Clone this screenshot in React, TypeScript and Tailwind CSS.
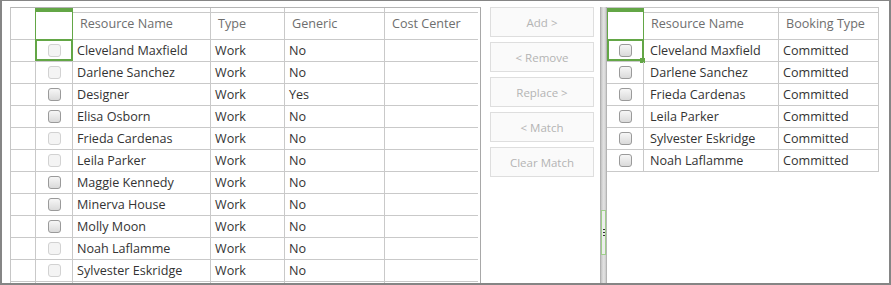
import React from 'react'

const leftRows = [
    { name: 'Cleveland Maxfield', type: 'Work', generic: 'No', taken: true },
    { name: 'Darlene Sanchez', type: 'Work', generic: 'No', taken: true },
    { name: 'Designer', type: 'Work', generic: 'Yes', taken: false },
    { name: 'Elisa Osborn', type: 'Work', generic: 'No', taken: false },
    { name: 'Frieda Cardenas', type: 'Work', generic: 'No', taken: true },
    { name: 'Leila Parker', type: 'Work', generic: 'No', taken: true },
    { name: 'Maggie Kennedy', type: 'Work', generic: 'No', taken: false },
    { name: 'Minerva House', type: 'Work', generic: 'No', taken: false },
    { name: 'Molly Moon', type: 'Work', generic: 'No', taken: false },
    { name: 'Noah Laflamme', type: 'Work', generic: 'No', taken: true },
    { name: 'Sylvester Eskridge', type: 'Work', generic: 'No', taken: true },
    { name: '', type: '', generic: '', taken: false },
]

const rightRows = ['Cleveland Maxfield', 'Darlene Sanchez', 'Frieda Cardenas', 'Leila Parker', 'Sylvester Eskridge', 'Noah Laflamme']

const buttons = ['Add >', '< Remove', 'Replace >', '< Match', 'Clear Match']

function Check(props: { light?: boolean }) {
    return props.light
        ? <div className="w-[13px] h-[13px] rounded-[3px] border border-[#d2d2d2] bg-[#f4f4f4]"></div>
        : <div className="w-[13px] h-[13px] rounded-[3px] border border-[#9a9a9a] bg-[linear-gradient(#f6f6f6,#dadada)]"></div>
}

function HeadCell(props: { label: string, w: string, last?: boolean }) {
    const line = props.last ? "" : "border-r"
    return (
        <div className={`${props.w} flex flex-col`}>
            <div className={`h-[5px] border-b border-[#c9c9c9] ${line}`}></div>
            <div className={`h-[27px] border-b border-[#c9c9c9] ${line} flex items-center pl-[7px] pb-[3px] text-[#6e6e6e]`}>{props.label}</div>
        </div>
    )
}

function Cell(props: { children?: React.ReactNode, w: string, last?: boolean, pad?: string }) {
    return (
        <div className={`${props.w} h-[22px] border-b border-[#c9c9c9] ${props.last ? "" : "border-r"} flex items-center ${props.pad ?? "pl-[4px]"} pt-[2px] text-[#333] whitespace-nowrap`}>
            {props.children}
        </div>
    )
}

export default function App() {
    const green = "border-[#63a646]"
    return (
        <div className="w-[891px] h-[285px] overflow-hidden bg-white border-2 border-t border-[#858585] flex items-start pt-[6px] pl-[8px] text-[12.6px]"
            style={{ fontFamily: '"Open Sans", "Noto Sans", sans-serif' }}>

            {/* left grid */}
            <div className="w-[471px] h-[300px] shrink-0 border-l border-t border-r border-l-[#c6c6c6] border-t-[#b4b4b4] border-r-[#a8a8a8]">
                <div className="flex">
                    <div className={`w-[25px] h-[32px] border-b border-r border-[#c9c9c9] border-r-[#63a646]`}></div>
                    <div className={`w-[37px] h-[32px] border-r ${green}`}>
                        <div className="h-[4px] bg-[#63a646] -ml-px w-[38px]"></div>
                    </div>
                    <HeadCell label="Resource Name" w="w-[138px]" />
                    <HeadCell label="Type" w="w-[74px]" />
                    <HeadCell label="Generic" w="w-[100px]" />
                    <HeadCell label="Cost Center" w="w-[93px]" last />
                </div>
                {leftRows.map((r, i) => (
                    <div key={i} className="flex">
                        <div className="w-[25px] h-[22px] border-b border-r border-[#c9c9c9]"></div>
                        <div className="relative w-[37px] h-[22px] border-b border-r border-[#c9c9c9] flex items-center justify-center">
                            {r.name && <Check light={r.taken} />}
                            {i === 0 && <div className={`absolute -left-px -top-px w-[38px] h-[22px] border-2 ${green}`}></div>}
                        </div>
                        <Cell w="w-[138px]">{r.name}</Cell>
                        <Cell w="w-[74px]">{r.type}</Cell>
                        <Cell w="w-[100px]">{r.generic}</Cell>
                        <Cell w="w-[93px]" last></Cell>
                    </div>
                ))}
            </div>

            {/* move buttons */}
            <div className="w-[104px] ml-[9px] shrink-0 flex flex-col gap-[5px]">
                {buttons.map((b) => (
                    <div key={b} className="h-[30px] border border-[#dedede] bg-[#fafafa] flex items-center justify-center pt-[2px] text-[11.5px] text-[#b4b4b4]">
                        {b}
                    </div>
                ))}
            </div>

            {/* splitter */}
            <div className="w-[7px] h-[280px] ml-[6px] shrink-0 bg-[linear-gradient(to_right,#a6a6a6,#cfcfcf_25%,#e4e4e4_55%,#cfcfcf_80%,#a6a6a6)]">
                <div className="mt-[203px] ml-[1px] w-[5px] h-[45px] border border-[#9fcf8b] bg-[#ededed] flex flex-col items-center gap-[2px] pt-[18px]">
                    <div className="w-[2px] h-px bg-[#333]"></div>
                    <div className="w-[2px] h-px bg-[#333]"></div>
                    <div className="w-[2px] h-px bg-[#333]"></div>
                </div>
            </div>

            {/* right grid */}
            <div className="w-[272px] shrink-0 border-t border-[#c6c6c6]">
                <div className="flex">
                    <div className={`w-[37px] h-[32px] border-l border-r ${green}`}>
                        <div className="h-[4px] bg-[#63a646] -ml-px w-[37px]"></div>
                    </div>
                    <HeadCell label="Resource Name" w="w-[135px]" />
                    <HeadCell label="Booking Type" w="w-[100px]" />
                </div>
                {rightRows.map((n, i) => (
                    <div key={n} className="flex">
                        <div className="relative w-[37px] h-[22px] border-b border-r border-[#c9c9c9] flex items-center justify-center">
                            <Check />
                            {i === 0 && (
                                <div className={`absolute left-0 -top-px w-[37px] h-[22px] border-2 ${green}`}>
                                    <div className="absolute -right-[3px] bottom-[-4px] w-[5px] h-[5px] bg-[#63a646]"></div>
                                </div>
                            )}
                        </div>
                        <Cell w="w-[135px]" pad="pl-[6px]">{n}</Cell>
                        <Cell w="w-[100px]">Committed</Cell>
                    </div>
                ))}
            </div>
        </div>
    )
}
